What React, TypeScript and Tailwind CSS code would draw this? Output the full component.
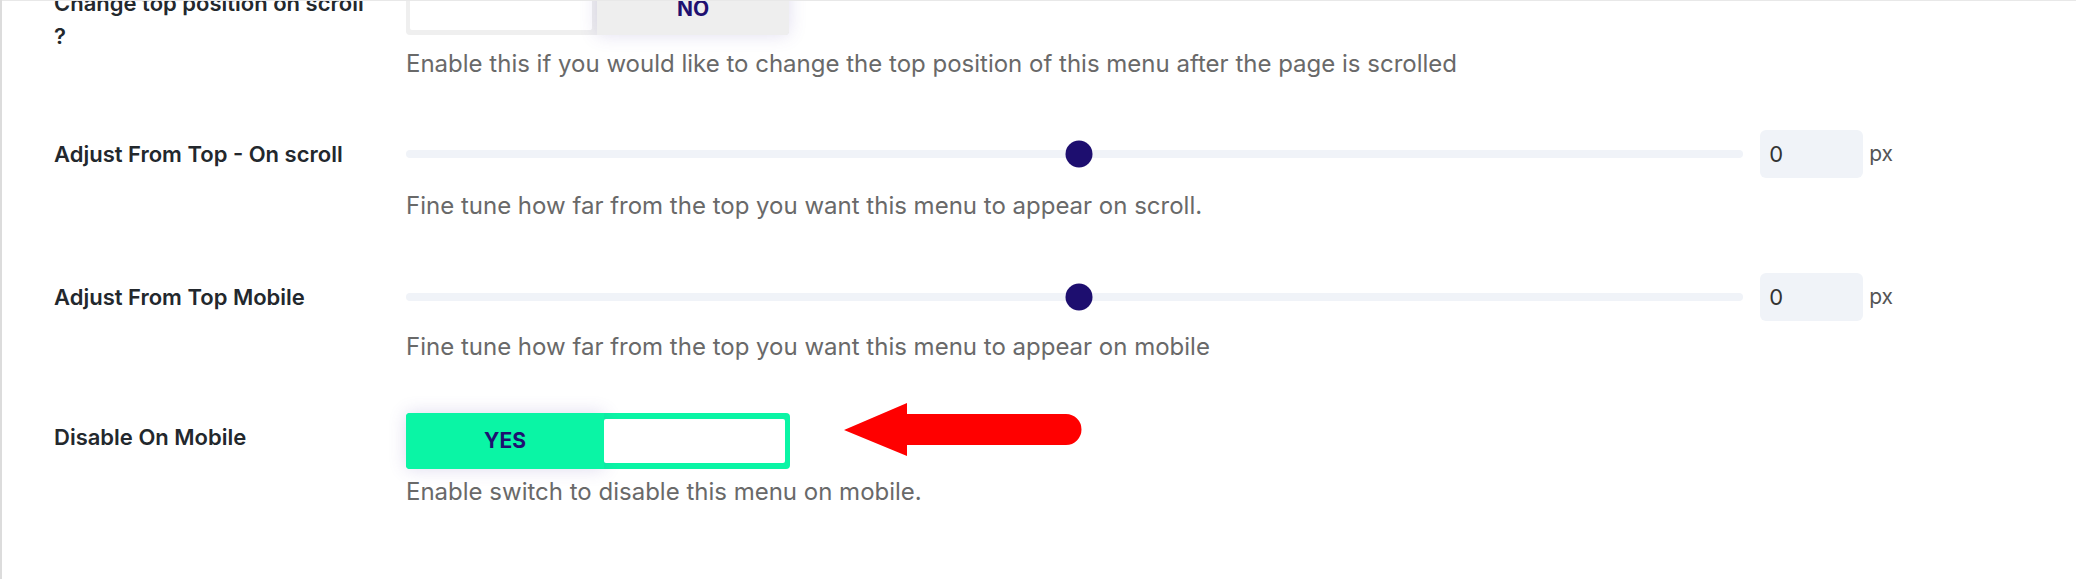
import React from "react";

function Label({ children }: { children: React.ReactNode }) {
  return (
    <div className="w-[406px] shrink-0 pl-[54px] pr-[40px] pt-[8px] text-[22px] font-semibold leading-[33px] text-[#23282d]">
      {children}
    </div>
  );
}

function Desc({ children, className }: { children: React.ReactNode; className: string }) {
  return (
    <p className={"whitespace-nowrap text-[24px] leading-[30px] text-[#696969] " + className}>{children}</p>
  );
}

function SliderRow() {
  return (
    <div className="flex h-[48px] items-center">
      <div className="relative h-[8px] flex-1 rounded-full bg-[#f0f3f8]">
        <div className="absolute left-[50.3%] top-1/2 h-[27px] w-[27px] -translate-x-1/2 -translate-y-1/2 rounded-full bg-[#1d0e6f]" />
      </div>
      <div className="ml-[17px] flex h-[48px] w-[103px] items-center rounded-[6px] bg-[#f0f3f8] pl-[9px] text-[22px] text-[#333]">
        0
      </div>
      <span className="ml-[6px] text-[21px] text-[#555]">px</span>
    </div>
  );
}

export default function App() {
  return (
    <div className="relative h-[579px] w-[2076px] overflow-hidden border-l-[2px] border-[#dcdcdc] bg-white font-['Inter',sans-serif]">
      <div className="absolute left-0 right-0 top-0 z-10 h-px bg-[#e8e8e8]" />
      <div className="-mt-[21px] ml-[-2px] flex flex-col">
        {/* Row 1 */}
        <div className="flex">
          <Label>
            Change top position on scroll
            <br />?
          </Label>
          <div className="flex-1 pr-[183px]">
            <div className="flex h-[56px] w-[383px] rounded-[4px] bg-[#efefef]">
              <div className="my-[5px] ml-[4px] flex-1 rounded-[2px] bg-white" />
              <div className="ml-[5px] flex w-[192px] items-center justify-center rounded-r-[4px] bg-[#eeeeee] pt-[4px] text-[21px] font-bold text-[#1e1070] shadow-[0_0_18px_rgba(90,70,170,0.18)]">
                NO
              </div>
            </div>
            <Desc className="mt-[14px]">
              Enable this if you would like to change the top position of this menu after the page is scrolled
            </Desc>
          </div>
        </div>

        {/* Row 2 */}
        <div className="mt-[51px] flex">
          <Label>Adjust From Top - On scroll</Label>
          <div className="flex-1 pr-[183px]">
            <SliderRow />
            <Desc className="mt-[13px]">Fine tune how far from the top you want this menu to appear on scroll.</Desc>
          </div>
        </div>

        {/* Row 3 */}
        <div className="mt-[52px] flex">
          <Label>Adjust From Top Mobile</Label>
          <div className="flex-1 pr-[183px]">
            <SliderRow />
            <Desc className="mt-[11px]">Fine tune how far from the top you want this menu to appear on mobile</Desc>
          </div>
        </div>

        {/* Row 4 */}
        <div className="mt-[51px] flex">
          <Label>Disable On Mobile</Label>
          <div className="relative flex-1 pr-[183px]">
            <div className="flex h-[56px] w-[384px] rounded-[4px] bg-[#0af5a5]">
              <div className="flex w-[198px] items-center justify-center rounded-l-[4px] bg-[#0af5a5] text-[21px] font-bold text-[#1e1070] shadow-[0_0_18px_rgba(90,70,170,0.2)]">
                YES
              </div>
              <div className="my-[6px] mr-[5px] flex-1 rounded-[2px] bg-white" />
            </div>
            <Desc className="mt-[8px]">Enable switch to disable this menu on mobile.</Desc>
            <svg
              className="absolute left-[438px] top-[-10px]"
              width="240"
              height="54"
              viewBox="0 0 240 54"
            >
              <path
                d="M0 27 L63 0 L63 11 L222 11 A15.5 15.5 0 0 1 222 42 L63 42 L63 53 Z"
                fill="#ff0000"
              />
            </svg>
          </div>
        </div>
      </div>
    </div>
  );
}
